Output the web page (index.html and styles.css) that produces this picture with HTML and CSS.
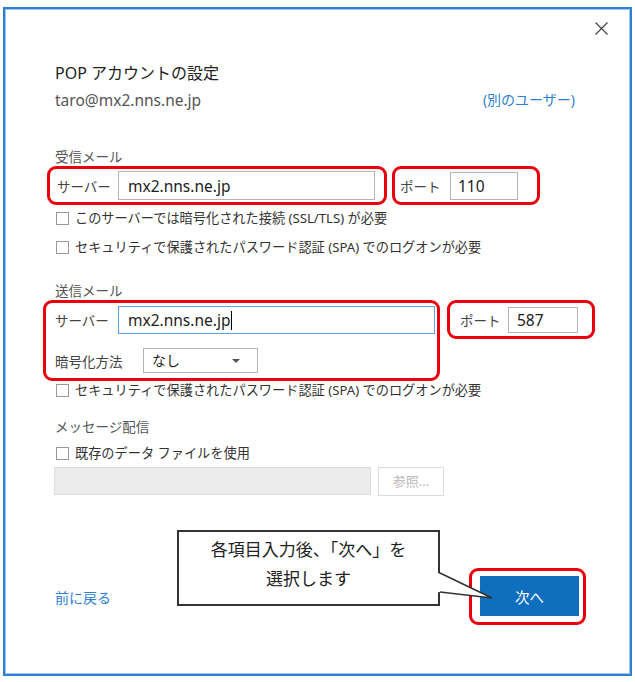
FILE: index.html
```html
<!DOCTYPE html>
<html lang="ja">
<head>
    <meta charset="UTF-8">
    <meta name="viewport" content="width=device-width, initial-scale=1.0">
    <title>POP アカウントの設定</title>
    <link rel="stylesheet" href="styles.css">
</head>
<body>
    <div class="dialog">

        <!-- 閉じるボタン -->
        <div class="close-row">
            <svg class="close" width="13" height="13" viewBox="0 0 13 13">
                <path d="M0.5 0.5 L12.5 12.5 M12.5 0.5 L0.5 12.5" stroke="#444" stroke-width="1.2" fill="none"/>
            </svg>
        </div>

        <h1 class="title">POP アカウントの設定</h1>
        <div class="account-row">
            <span class="account">taro@mx2.nns.ne.jp</span>
            <a class="link" href="#">(別のユーザー)</a>
        </div>

        <!-- 受信メール -->
        <div class="section-label incoming">受信メール</div>
        <div class="mark-row in-row">
            <div class="mark server-mark">
                <span class="field-label">サーバー</span>
                <div class="textbox server-box">mx2.nns.ne.jp</div>
            </div>
            <div class="mark port-mark">
                <span class="field-label">ポート</span>
                <div class="textbox port-box">110</div>
            </div>
        </div>
        <div class="check cb1"><span class="box"></span>このサーバーでは暗号化された接続 (SSL/TLS) が必要</div>
        <div class="check cb2"><span class="box"></span>セキュリティで保護されたパスワード認証 (SPA) でのログオンが必要</div>

        <!-- 送信メール -->
        <div class="section-label outgoing">送信メール</div>
        <div class="mark-row out-row">
            <div class="mark enc-mark">
                <div class="field-row">
                    <span class="field-label">サーバー</span>
                    <div class="textbox smtp-box focused">mx2.nns.ne.jp<span class="caret"></span></div>
                </div>
                <div class="field-row enc-row">
                    <span class="field-label enc-label">暗号化方法</span>
                    <div class="select">なし<span class="arrow"></span></div>
                </div>
            </div>
            <div class="mark port-mark2">
                <span class="field-label">ポート</span>
                <div class="textbox port-box2">587</div>
            </div>
        </div>
        <div class="check cb3"><span class="box"></span>セキュリティで保護されたパスワード認証 (SPA) でのログオンが必要</div>

        <!-- メッセージ配信 -->
        <div class="section-label delivery">メッセージ配信</div>
        <div class="check cb4"><span class="box"></span>既存のデータ ファイルを使用</div>
        <div class="file-row">
            <div class="file-box"></div>
            <div class="browse">参照...</div>
        </div>

        <div class="footer">
            <a class="link back" href="#">前に戻る</a>
            <div class="next-mark">
                <button class="next">次へ</button>
            </div>
        </div>

        <!-- 吹き出し -->
        <div class="callout">
            各項目入力後、「次へ」を<br>選択します
            <svg class="tail" width="56" height="32" viewBox="0 0 56 32">
                <polygon points="0,3 54,28 0,22" fill="#fff"/>
                <polyline points="2,3 54,28 2,22" fill="none" stroke="#333" stroke-width="1.6"/>
            </svg>
        </div>
    </div>
</body>
</html>
```

FILE: styles.css
```css
body {
    margin: 0;
    font-family: "Noto Sans", "Noto Sans CJK JP", sans-serif;
    background: #fff;
    color: #333;
}

.dialog {
    position: relative;
    box-sizing: border-box;
    width: 629px;
    height: 669px;
    margin: 7px 0 0 3px;
    padding: 0 23px 0 50px;
    border: 2px solid #2f80d2;
    box-shadow: inset 0 0 0 1px #9cc6ee;
    background: #fff;
}

.close-row {
    display: flex;
    justify-content: flex-end;
    height: 52px;
}

.close {
    margin-top: 13px;
    margin-right: -1px;
}

.title {
    margin: 0;
    font-size: 16px;
    font-weight: normal;
    line-height: 24px;
    color: #222;
}

.account-row {
    display: flex;
    justify-content: space-between;
    margin-top: 5px;
    padding-right: 32px;
    line-height: 20px;
}

.account {
    font-size: 15.5px;
    color: #555;
}

.link {
    color: #2d7fd0;
    text-decoration: none;
    font-size: 14px;
}

.section-label {
    font-size: 13.5px;
    line-height: 18px;
    color: #555;
}

.incoming {
    margin-top: 38px;
}

.outgoing {
    margin-top: 26px;
}

.delivery {
    margin-top: 19px;
}

/* 赤枠 */
.mark-row {
    display: flex;
}

.mark {
    box-sizing: border-box;
    border: 3px solid #e8000d;
    border-radius: 9px;
}

.in-row {
    margin-left: -8px;
    gap: 5px;
}

.out-row {
    margin-left: -12px;
    gap: 7px;
    align-items: flex-start;
}

.server-mark,
.port-mark,
.port-mark2 {
    display: flex;
    align-items: center;
    height: 39px;
}

.server-mark {
    width: 340px;
    padding: 0 9px 0 7px;
}

.port-mark {
    width: 148px;
    padding-left: 5px;
}

.port-mark2 {
    width: 148px;
    padding-left: 10px;
}

.field-label {
    font-size: 13.5px;
    color: #444;
    flex-shrink: 0;
}

.server-mark .field-label {
    width: 61px;
}

.port-mark .field-label {
    width: 50px;
}

.port-mark2 .field-label {
    width: 48px;
}

.textbox {
    box-sizing: border-box;
    display: flex;
    align-items: center;
    border: 1px solid #b4b4b4;
    background: #fff;
    font-size: 15.5px;
    color: #222;
}

.server-box {
    width: 257px;
    height: 29px;
    padding-left: 9px;
}

.port-box {
    width: 68px;
    height: 28px;
    padding-left: 7px;
}

.port-box2 {
    width: 70px;
    height: 26px;
    padding-left: 8px;
}

.enc-mark {
    width: 397px;
    height: 81px;
    padding: 3px 2px 0 9px;
}

.field-row {
    display: flex;
    align-items: center;
}

.field-row .field-label {
    width: 63px;
}

.smtp-box {
    width: 317px;
    height: 28px;
    padding-left: 9px;
}

.focused {
    border-color: #5fa2df;
}

.caret {
    display: inline-block;
    width: 1px;
    height: 19px;
    margin-left: 1px;
    background: #000;
}

.enc-row {
    margin-top: 14px;
}

.field-row .enc-label {
    width: 88px;
}

.select {
    position: relative;
    box-sizing: border-box;
    width: 115px;
    height: 25px;
    padding-left: 8px;
    border: 1px solid #b4b4b4;
    font-size: 14px;
    line-height: 23px;
    color: #222;
}

.arrow {
    position: absolute;
    right: 17px;
    top: 10px;
    border-left: 4px solid transparent;
    border-right: 4px solid transparent;
    border-top: 4px solid #555;
}

/* チェックボックス */
.check {
    display: flex;
    align-items: center;
    gap: 6px;
    font-size: 13.2px;
    line-height: 18px;
    color: #333;
}

.check .box {
    box-sizing: border-box;
    width: 13px;
    height: 13px;
    margin-left: 1px;
    border: 1px solid #999;
    background: #fff;
}

.cb1 {
    margin-top: 4px;
}

.cb2 {
    margin-top: 11px;
}

.cb4 {
    margin-top: 8px;
}

.file-row {
    display: flex;
    gap: 7px;
    margin-top: 5px;
    margin-left: -1px;
}

.file-box {
    box-sizing: border-box;
    width: 317px;
    height: 28px;
    border: 1px solid #dcdcdc;
    background: #ececec;
}

.browse {
    box-sizing: border-box;
    width: 66px;
    height: 29px;
    border: 1px solid #dcdcdc;
    text-align: center;
    font-size: 13px;
    line-height: 27px;
    color: #b8b8b8;
}

.footer {
    display: flex;
    justify-content: space-between;
    align-items: center;
    margin-top: 72px;
    padding-right: 21px;
}

.back {
    font-size: 14px;
}

.next-mark {
    border: 3px solid #e8000d;
    border-radius: 9px;
    padding: 5px 4px 6px 8px;
}

.next {
    display: block;
    width: 99px;
    height: 40px;
    border: none;
    background: #106ebe;
    color: #fff;
    font-family: "Noto Sans CJK JP", sans-serif;
    font-size: 14.5px;
}

.callout {
    position: absolute;
    left: 172px;
    top: 521px;
    z-index: 2;
    box-sizing: border-box;
    width: 263px;
    height: 76px;
    padding-top: 4px;
    border: 2px solid #333;
    background: #fff;
    text-align: center;
    font-family: "Liberation Serif", "Noto Sans CJK JP", serif;
    font-size: 17px;
    line-height: 29px;
    color: #222;
}

.callout .tail {
    position: absolute;
    left: 259px;
    top: 38px;
}
```
